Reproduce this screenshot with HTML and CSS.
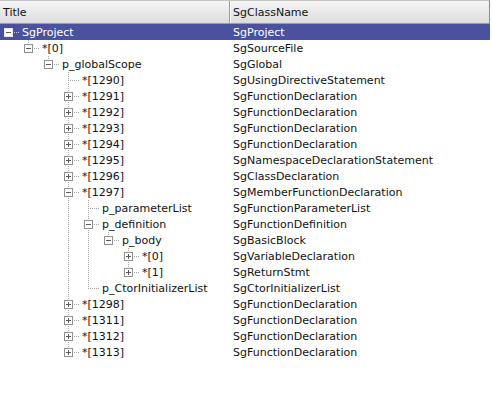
FILE: index.html
```html
<!DOCTYPE html>
<html>
<head>
<meta charset="utf-8">
<link rel="stylesheet" href="styles.css">
</head>
<body>
<div class="tree">
  <div class="header">
    <div class="hcell c1">Title</div>
    <div class="hcell c2">SgClassName</div>
  </div>

  <div class="row sel">
    <div class="c1 tcell"><span class="o root"><span class="h minus"></span></span><span class="label">SgProject</span></div>
    <div class="c2 ccell">SgProject</div>
  </div>
  <div class="row">
    <div class="c1 tcell"><span class="u"></span><span class="o"><span class="h minus"></span></span><span class="label">*[0]</span></div>
    <div class="c2 ccell">SgSourceFile</div>
  </div>
  <div class="row">
    <div class="c1 tcell"><span class="u"></span><span class="u"></span><span class="o"><span class="h minus"></span></span><span class="label">p_globalScope</span></div>
    <div class="c2 ccell">SgGlobal</div>
  </div>
  <div class="row">
    <div class="c1 tcell"><span class="u"></span><span class="u"></span><span class="u"></span><span class="o more leaf"></span><span class="label">*[1290]</span></div>
    <div class="c2 ccell">SgUsingDirectiveStatement</div>
  </div>
  <div class="row">
    <div class="c1 tcell"><span class="u"></span><span class="u"></span><span class="u"></span><span class="o more"><span class="h plus"></span></span><span class="label">*[1291]</span></div>
    <div class="c2 ccell">SgFunctionDeclaration</div>
  </div>
  <div class="row">
    <div class="c1 tcell"><span class="u"></span><span class="u"></span><span class="u"></span><span class="o more"><span class="h plus"></span></span><span class="label">*[1292]</span></div>
    <div class="c2 ccell">SgFunctionDeclaration</div>
  </div>
  <div class="row">
    <div class="c1 tcell"><span class="u"></span><span class="u"></span><span class="u"></span><span class="o more"><span class="h plus"></span></span><span class="label">*[1293]</span></div>
    <div class="c2 ccell">SgFunctionDeclaration</div>
  </div>
  <div class="row">
    <div class="c1 tcell"><span class="u"></span><span class="u"></span><span class="u"></span><span class="o more"><span class="h plus"></span></span><span class="label">*[1294]</span></div>
    <div class="c2 ccell">SgFunctionDeclaration</div>
  </div>
  <div class="row">
    <div class="c1 tcell"><span class="u"></span><span class="u"></span><span class="u"></span><span class="o more"><span class="h plus"></span></span><span class="label">*[1295]</span></div>
    <div class="c2 ccell">SgNamespaceDeclarationStatement</div>
  </div>
  <div class="row">
    <div class="c1 tcell"><span class="u"></span><span class="u"></span><span class="u"></span><span class="o more"><span class="h plus"></span></span><span class="label">*[1296]</span></div>
    <div class="c2 ccell">SgClassDeclaration</div>
  </div>
  <div class="row">
    <div class="c1 tcell"><span class="u"></span><span class="u"></span><span class="u"></span><span class="o more"><span class="h minus"></span></span><span class="label">*[1297]</span></div>
    <div class="c2 ccell">SgMemberFunctionDeclaration</div>
  </div>
  <div class="row">
    <div class="c1 tcell"><span class="u"></span><span class="u"></span><span class="u"></span><span class="u v"></span><span class="o more leaf"></span><span class="label">p_parameterList</span></div>
    <div class="c2 ccell">SgFunctionParameterList</div>
  </div>
  <div class="row">
    <div class="c1 tcell"><span class="u"></span><span class="u"></span><span class="u"></span><span class="u v"></span><span class="o more"><span class="h minus"></span></span><span class="label">p_definition</span></div>
    <div class="c2 ccell">SgFunctionDefinition</div>
  </div>
  <div class="row">
    <div class="c1 tcell"><span class="u"></span><span class="u"></span><span class="u"></span><span class="u v"></span><span class="u v"></span><span class="o"><span class="h minus"></span></span><span class="label">p_body</span></div>
    <div class="c2 ccell">SgBasicBlock</div>
  </div>
  <div class="row">
    <div class="c1 tcell"><span class="u"></span><span class="u"></span><span class="u"></span><span class="u v"></span><span class="u v"></span><span class="u"></span><span class="o more"><span class="h plus"></span></span><span class="label">*[0]</span></div>
    <div class="c2 ccell">SgVariableDeclaration</div>
  </div>
  <div class="row">
    <div class="c1 tcell"><span class="u"></span><span class="u"></span><span class="u"></span><span class="u v"></span><span class="u v"></span><span class="u"></span><span class="o"><span class="h plus"></span></span><span class="label">*[1]</span></div>
    <div class="c2 ccell">SgReturnStmt</div>
  </div>
  <div class="row">
    <div class="c1 tcell"><span class="u"></span><span class="u"></span><span class="u"></span><span class="u v"></span><span class="o leaf"></span><span class="label">p_CtorInitializerList</span></div>
    <div class="c2 ccell">SgCtorInitializerList</div>
  </div>
  <div class="row">
    <div class="c1 tcell"><span class="u"></span><span class="u"></span><span class="u"></span><span class="o more"><span class="h plus"></span></span><span class="label">*[1298]</span></div>
    <div class="c2 ccell">SgFunctionDeclaration</div>
  </div>
  <div class="row">
    <div class="c1 tcell"><span class="u"></span><span class="u"></span><span class="u"></span><span class="o more"><span class="h plus"></span></span><span class="label">*[1311]</span></div>
    <div class="c2 ccell">SgFunctionDeclaration</div>
  </div>
  <div class="row">
    <div class="c1 tcell"><span class="u"></span><span class="u"></span><span class="u"></span><span class="o more"><span class="h plus"></span></span><span class="label">*[1312]</span></div>
    <div class="c2 ccell">SgFunctionDeclaration</div>
  </div>
  <div class="row">
    <div class="c1 tcell"><span class="u"></span><span class="u"></span><span class="u"></span><span class="o"><span class="h plus"></span></span><span class="label">*[1313]</span></div>
    <div class="c2 ccell">SgFunctionDeclaration</div>
  </div>
</div>
</body>
</html>
```
FILE: styles.css
```css
html, body {
  margin: 0;
  padding: 0;
  background: #ffffff;
}

body {
  font-family: "DejaVu Sans", "Liberation Sans", sans-serif;
  font-size: 11px;
  color: #111111;
}

.tree {
  width: 490px;
  display: flex;
  flex-direction: column;
}

.header {
  display: flex;
  height: 24px;
  box-sizing: border-box;
  border-top: 1px solid #c4c4c4;
  border-bottom: 1px solid #9c9c9c;
  border-right: 1px solid #8a8a8a;
  background: linear-gradient(to bottom, #f6f6f6, #dcdcdc);
}

.hcell {
  box-sizing: border-box;
  padding: 2px 0 0 3px;
  line-height: 20px;
  color: #111111;
}

.hcell.c1 {
  width: 230px;
  border-right: 1px solid #9a9a9a;
  box-shadow: 1px 0 0 #fafafa;
}

.hcell.c2 {
  flex: 1;
}

.row {
  display: flex;
  height: 16px;
}

.row.sel {
  background: #4a52a0;
  color: #ffffff;
}

.c1 {
  width: 230px;
  flex: none;
}

.tcell {
  display: flex;
  align-items: flex-start;
}

.ccell {
  flex: 1;
  box-sizing: border-box;
  padding: 2px 0 0 3px;
  line-height: 14px;
  white-space: nowrap;
}

.label {
  padding: 2px 0 0 2px;
  line-height: 14px;
  white-space: nowrap;
}

/* indentation unit */
.u {
  width: 20px;
  height: 16px;
  flex: none;
}

.u.v {
  background: repeating-linear-gradient(to bottom, #a2a2a2 0 1px, transparent 1px 2px) no-repeat 8px 0 / 1px 16px;
}

/* own unit: connector lines + handle */
.o {
  width: 20px;
  height: 16px;
  flex: none;
  display: flex;
  align-items: flex-start;
  background:
    repeating-linear-gradient(to right, #a2a2a2 0 1px, transparent 1px 2px) no-repeat 8px 8px / 12px 1px,
    repeating-linear-gradient(to bottom, #a2a2a2 0 1px, transparent 1px 2px) no-repeat 8px 0 / 1px 8px;
}

.o.more {
  background:
    repeating-linear-gradient(to right, #a2a2a2 0 1px, transparent 1px 2px) no-repeat 8px 8px / 12px 1px,
    repeating-linear-gradient(to bottom, #a2a2a2 0 1px, transparent 1px 2px) no-repeat 8px 0 / 1px 16px;
}

.o.root {
  background:
    repeating-linear-gradient(to right, #c8cbe6 0 1px, transparent 1px 2px) no-repeat 8px 8px / 12px 1px;
}

/* expand handle */
.h {
  width: 9px;
  height: 9px;
  box-sizing: border-box;
  margin: 4px 0 0 4px;
  border: 1px solid #909090;
  background-color: #ffffff;
}

.h.minus {
  background:
    linear-gradient(#5a5a5a, #5a5a5a) no-repeat center / 5px 1px,
    #ffffff;
}

.h.plus {
  background:
    linear-gradient(#5a5a5a, #5a5a5a) no-repeat center / 5px 1px,
    linear-gradient(#5a5a5a, #5a5a5a) no-repeat center / 1px 5px,
    #ffffff;
}

.sel .h {
  border-color: #e8e8f0;
}
```
